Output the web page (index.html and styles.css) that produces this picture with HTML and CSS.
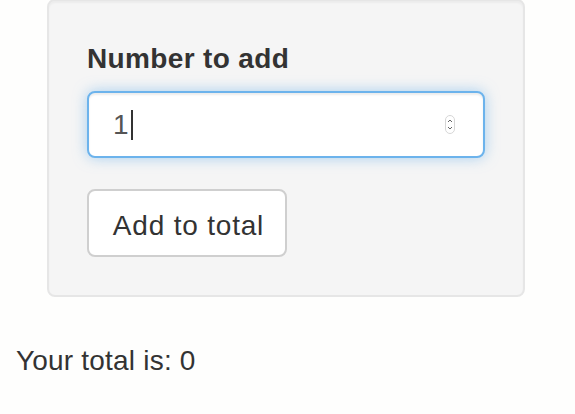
FILE: index.html
```html
<!DOCTYPE html>
<html>
<head>
<meta charset="utf-8">
<link rel="stylesheet" href="styles.css">
</head>
<body>
<div class="page">
  <div class="well">
    <div class="form-group">
      <label class="control-label">Number to add</label>
      <div class="num-input">
        <span class="value">1</span><span class="caret"></span>
        <svg class="spinner" width="10" height="19" viewBox="0 0 10 19">
          <rect x="0.5" y="0.5" width="9" height="18" rx="4.5" fill="#fff" stroke="#d6d6d6"/>
          <path d="M3 7 L5 5 L7 7" fill="none" stroke="#666" stroke-width="1"/>
          <path d="M3 12 L5 14 L7 12" fill="none" stroke="#666" stroke-width="1"/>
        </svg>
      </div>
    </div>
    <button class="btn">Add to total</button>
  </div>
  <div class="total">Your total is: 0</div>
</div>
</body>
</html>
```
FILE: styles.css
```css
html, body {
  margin: 0;
  padding: 0;
  background: #fefefd;
}
body {
  font-family: "Liberation Sans", Arial, Helvetica, sans-serif;
  font-size: 28px;
  line-height: 40px;
  color: #333;
}
.page {
  padding-left: 16px;
  overflow: hidden;
  height: 414px;
}
.well {
  box-sizing: border-box;
  width: 478px;
  margin: -1px 0 44px 31px;
  padding: 38px;
  background: #f5f5f5;
  border: 2px solid #e6e6e6;
  border-radius: 8px;
  box-shadow: inset 0 2px 2px rgba(0,0,0,0.04);
}
.form-group {
  margin-bottom: 31px;
}
.control-label {
  display: block;
  font-weight: bold;
  letter-spacing: 0.35px;
  margin-bottom: 12px;
}
.num-input {
  box-sizing: border-box;
  height: 67px;
  width: 100%;
  display: flex;
  align-items: center;
  padding: 0 28px 0 24px;
  background: #fff;
  border: 2px solid #6cb3ec;
  border-radius: 8px;
  box-shadow: inset 0 2px 2px rgba(0,0,0,0.075), 0 0 14px rgba(102,175,233,0.55);
  color: #555;
}
.value {
  line-height: 40px;
}
.caret {
  display: inline-block;
  width: 2px;
  height: 30px;
  background: #333;
  margin-left: 2px;
}
.spinner {
  margin-left: auto;
}
.btn {
  box-sizing: border-box;
  display: block;
  height: 68px;
  width: 200px;
  padding: 5px 0 0 3px;
  font-family: inherit;
  font-size: 28px;
  letter-spacing: 0.8px;
  color: #333;
  background: #fff;
  border: 2px solid #cfcfcf;
  border-radius: 8px;
}
.total {
  line-height: 40px;
  letter-spacing: 0.2px;
}
```
